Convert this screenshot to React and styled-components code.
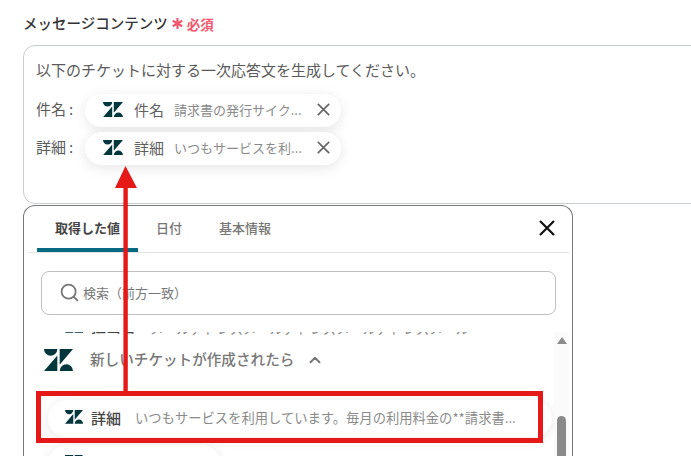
import styled, { createGlobalStyle } from 'styled-components';
import { Search, ChevronUp } from 'lucide-react';

const GlobalStyle = createGlobalStyle`
  html, body {
    margin: 0;
    padding: 0;
    background: #fff;
    overflow: hidden;
  }
  body {
    font-family: "Noto Sans CJK JP", "Noto Sans", sans-serif;
    color: #3c3c3c;
  }
`;

const Page = styled.div`
  position: relative;
  width: 691px;
  height: 456px;
  overflow: hidden;
  padding: 13px 0 0 23px;
  box-sizing: border-box;
`;

const LabelRow = styled.div`
  display: flex;
  align-items: center;
  height: 20px;
  margin-bottom: 12px;
`;

const Label = styled.span`
  font-size: 14.5px;
  font-weight: 500;
  color: #333;
  margin-top: -1px;
`;

const Required = styled.span`
  display: flex;
  align-items: center;
  gap: 4px;
  margin: 1px 0 0 4px;
  font-size: 13.5px;
  font-weight: 700;
  color: #f5566e;
`;

const Field = styled.div`
  width: 720px;
  height: 159px;
  box-sizing: border-box;
  border: 1px solid #c9ccd1;
  border-radius: 12px;
  padding: 13px 12px 0;
`;

const Line = styled.div`
  font-size: 15px;
  line-height: 22px;
  color: #5a5a5a;
  margin-bottom: 13px;
`;

const TokenRow = styled.div`
  display: flex;
  align-items: center;
  height: 33px;
  margin-bottom: 5px;
`;

const RowName = styled.span`
  width: 49px;
  flex: none;
  font-size: 15px;
  color: #5a5a5a;
  margin-top: -5px;
  white-space: nowrap;
`;

const Colon = styled.span`
  padding-left: 3px;
`;

const Token = styled.div`
  width: 256px;
  height: 33px;
  box-sizing: border-box;
  display: flex;
  align-items: center;
  padding: 0 0 2px 18px;
  border-radius: 17px;
  background: #fff;
  box-shadow: 0 3px 14px rgba(0, 0, 0, 0.1);
`;

const TokenName = styled.span`
  margin-left: 11px;
  font-size: 15px;
  color: #5f5f5f;
  white-space: nowrap;
`;

const TokenValue = styled.span`
  margin-left: 10px;
  width: 143px;
  flex: none;
  font-size: 13px;
  color: #8a8a8a;
  white-space: nowrap;
`;

const Panel = styled.div`
  width: 550px;
  height: 270px;
  margin-top: 1px;
  box-sizing: border-box;
  border: 1px solid #777;
  border-bottom: none;
  border-radius: 12px 12px 0 0;
  background: #fff;
  display: flex;
  flex-direction: column;
`;

const TabBar = styled.div`
  height: 46px;
  flex: none;
  margin: 0 3px 0 4px;
  display: flex;
  align-items: stretch;
  border-bottom: 1px solid #e4e4e4;
`;

const Tab = styled.div`
  display: flex;
  align-items: center;
  justify-content: center;
  box-sizing: border-box;
  width: ${(p) => p.$width}px;
  padding-top: 1px;
  font-size: 13px;
  font-weight: ${(p) => (p.$active ? 700 : 500)};
  color: ${(p) => (p.$active ? '#444' : '#777')};
  border-bottom: 4px solid ${(p) => (p.$active ? '#086a82' : 'transparent')};
  border-radius: 4px 4px 0 0;
`;

const TabSpacer = styled.div`
  width: 9px;
`;

const CloseButton = styled.div`
  margin-left: auto;
  display: flex;
  align-items: center;
  padding: 0 14px 0 0;
  margin-bottom: 3px;
  color: #111;
`;

const SearchBox = styled.div`
  flex: none;
  margin: 18px 16px 0 17px;
  height: 44px;
  box-sizing: border-box;
  border: 1px solid #bfbfbf;
  border-radius: 8px;
  display: flex;
  align-items: center;
  gap: 3px;
  padding: 0 0 2px 17px;
  color: #777;
  font-size: 13px;
`;

const ListArea = styled.div`
  flex: 1;
  min-height: 0;
  margin-top: 17px;
  display: flex;
  overflow: hidden;
`;

const List = styled.div`
  flex: 1;
  min-width: 0;
  overflow: hidden;
`;

const ClippedRow = styled.div`
  height: 6px;
  margin: -9px 0 0 41px;
  display: flex;
  align-items: center;
  font-size: 13.3px;
  line-height: 6px;
  white-space: nowrap;
`;

const GroupRow = styled.div`
  display: flex;
  align-items: center;
  margin: 16px 0 0 20px;
  height: 30px;
`;

const GroupName = styled.span`
  margin: -3px 0 0 17px;
  font-size: 14.6px;
  font-weight: 500;
  color: #777;
`;

const GroupChevron = styled(ChevronUp)`
  margin-left: 12px;
`;

const ValueChip = styled.div`
  width: ${(p) => p.$width}px;
  height: 37px;
  flex: none;
  box-sizing: border-box;
  margin: ${(p) => p.$top}px 0 0 24px;
  padding: 0 0 3px 17px;
  display: flex;
  align-items: center;
  border-radius: 19px;
  background: #fff;
  box-shadow: 0 2px 12px rgba(0, 0, 0, 0.1);
  white-space: nowrap;
`;

const ChipName = styled.span`
  margin-left: 8px;
  font-size: 15px;
  font-weight: 500;
  color: #444;
`;

const ChipValue = styled.span`
  margin: ${(p) => p.$drop || 0}px 0 0 14px;
  font-size: 13.3px;
  color: #8a8a8a;
`;

const ScrollTrack = styled.div`
  width: 15px;
  flex: none;
  margin-right: 3px;
  background: #fafafa;
  display: flex;
  flex-direction: column;
  align-items: center;
  padding-top: 5px;
`;

const ScrollArrow = styled.div`
  width: 0;
  height: 0;
  border-left: 5px solid transparent;
  border-right: 5px solid transparent;
  border-bottom: 7px solid #8a8a8a;
`;

const ScrollThumb = styled.div`
  width: 9px;
  flex: 1;
  margin-top: 72px;
  background: #8a8a8a;
  border-radius: 5px 5px 0 0;
`;

const Highlight = styled.div`
  position: absolute;
  left: 36px;
  top: 391px;
  width: 507px;
  height: 52px;
  box-sizing: border-box;
  border: 5px solid #e61919;
`;

const ArrowOverlay = styled.svg`
  position: absolute;
  left: 110px;
  top: 165px;
`;

const ZendeskLogo = ({ size = 20 }) => (
  <svg width={size} height={size * 0.76} viewBox="0 0 25 19" style={{ flex: 'none' }}>
    <path
      fill="#03363d"
      d="M0 0h11.5a5.75 5.75 0 0 1-11.5 0zM11.5 5.5V19H0zM13.5 0H25L13.5 13.5zM13.5 19a5.75 5.75 0 0 1 11.5 0z"
    />
  </svg>
);

const Cross = ({ size, width, color }) => (
  <svg width={size} height={size} viewBox="0 0 16 16" style={{ flex: 'none' }}>
    <path d="M1 1L15 15M15 1L1 15" fill="none" stroke={color} strokeWidth={width} />
  </svg>
);

const AsteriskMark = () => (
  <svg width="11" height="11" viewBox="0 0 10 10">
    <path d="M5 0v10M.7 2.5l8.6 5M.7 7.5l8.6-5" fill="none" stroke="#f5566e" strokeWidth="1.9" />
  </svg>
);

const FIELD_TOKENS = [
  { name: '件名', value: '請求書の発行サイク...' },
  { name: '詳細', value: 'いつもサービスを利...' },
];

export default function App() {
  return (
    <Page>
      <GlobalStyle />
      <LabelRow>
        <Label>メッセージコンテンツ</Label>
        <Required>
          <AsteriskMark />
          必須
        </Required>
      </LabelRow>

      <Field>
        <Line>以下のチケットに対する一次応答文を生成してください。</Line>
        {FIELD_TOKENS.map((t) => (
          <TokenRow key={t.name}>
            <RowName>
              {t.name}
              <Colon>:</Colon>
            </RowName>
            <Token>
              <ZendeskLogo size={20} />
              <TokenName>{t.name}</TokenName>
              <TokenValue>{t.value}</TokenValue>
              <Cross size={13} width={2} color="#666" />
            </Token>
          </TokenRow>
        ))}
      </Field>

      <Panel>
        <TabBar>
          <TabSpacer />
          <Tab $active $width={101}>取得した値</Tab>
          <Tab $width={62}>日付</Tab>
          <Tab $width={90}>基本情報</Tab>
          <CloseButton>
            <Cross size={16} width={2.2} color="#111" />
          </CloseButton>
        </TabBar>

        <SearchBox>
          <Search size={21} strokeWidth={2} />
          検索（前方一致）
        </SearchBox>

        <ListArea>
          <List>
            <ClippedRow>
              <ZendeskLogo size={18} />
              <ChipName>担当者</ChipName>
              <ChipValue $drop={6}>メールアドレスメールアドレスメールアドレスメール</ChipValue>
            </ClippedRow>
            <GroupRow>
              <ZendeskLogo size={29} />
              <GroupName>新しいチケットが作成されたら</GroupName>
              <GroupChevron size={18} color="#777" strokeWidth={2.6} />
            </GroupRow>
            <ValueChip $width={504} $top={25}>
              <ZendeskLogo size={18} />
              <ChipName>詳細</ChipName>
              <ChipValue>いつもサービスを利用しています。毎月の利用料金の**請求書...</ChipValue>
            </ValueChip>
            <ValueChip $width={172} $top={8}>
              <ZendeskLogo size={18} />
              <ChipName>優先度</ChipName>
            </ValueChip>
          </List>
          <ScrollTrack>
            <ScrollArrow />
            <ScrollThumb />
          </ScrollTrack>
        </ListArea>
      </Panel>

      <Highlight />
      <ArrowOverlay width="32" height="230" viewBox="0 0 32 230">
        <path fill="#e61919" d="M15.5 1L27 23H17.8V226H13.4V23H5z" />
      </ArrowOverlay>
    </Page>
  );
}
